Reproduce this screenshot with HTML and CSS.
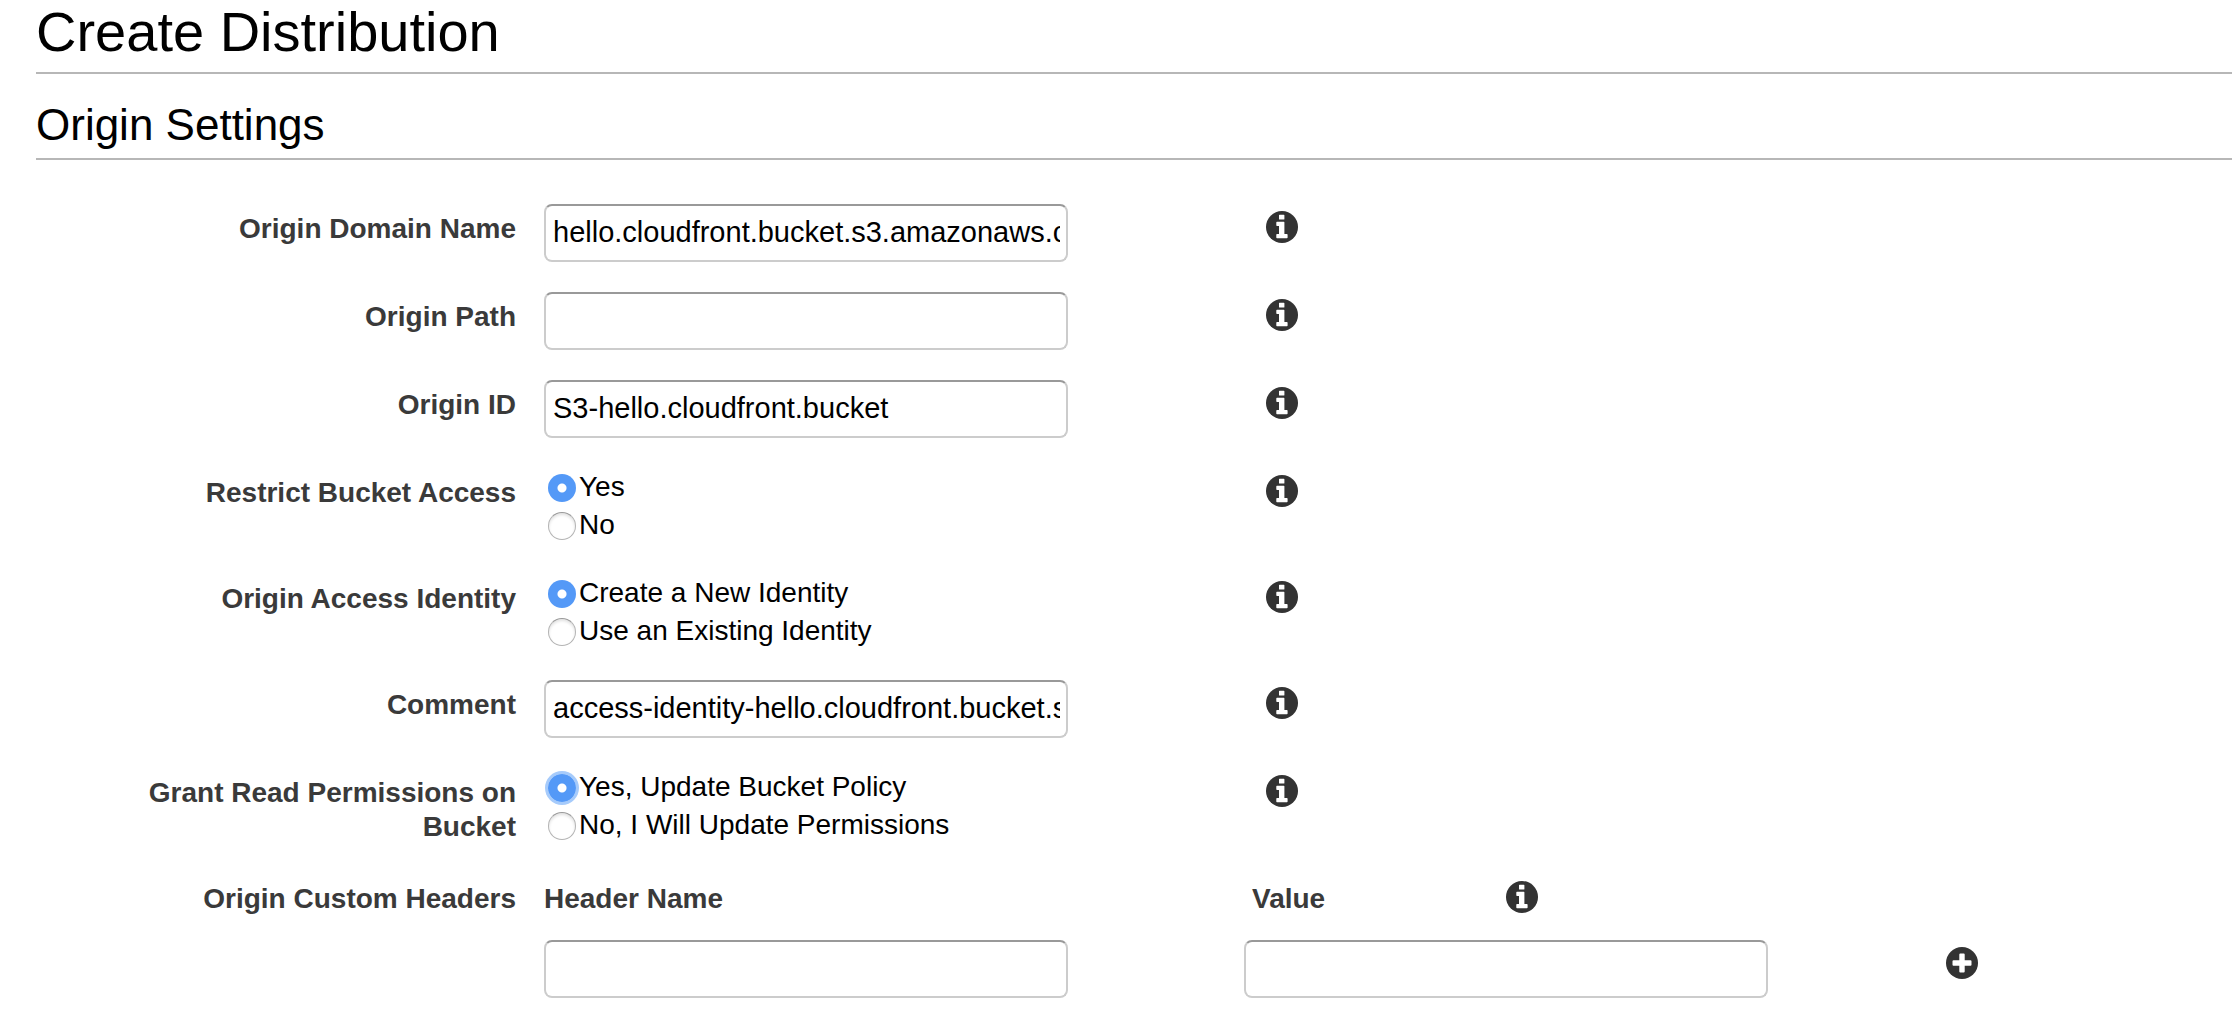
FILE: index.html
```html
<!DOCTYPE html>
<html lang="en">
<head>
<meta charset="utf-8">
<meta name="viewport" content="width=device-width, initial-scale=1">
<title>Create Distribution</title>
<link rel="stylesheet" href="styles.css">
</head>
<body>
<svg class="sprite" aria-hidden="true">
  <symbol id="info" viewBox="0 0 32 32">
    <circle cx="16" cy="16" r="16" fill="#333"/>
    <path fill="#fff" d="M13.600 3.700h4.200q.6 0 .6.600v3.700q0 .6-.6.600h-4.200q-.6 0-.6-.6V4.300q0-.6.600-.6zM11 10.700h6.800q.6 0 .6.600V23h2.500q.7 0 .7.700v2.900q0 .7-.7.700H11q-.7 0-.7-.7v-2.900q0-.7.700-.7h2V15h-2q-.7 0-.7-.7v-2.900q0-.7.700-.7z"/>
  </symbol>
  <symbol id="plus" viewBox="0 0 32 32">
    <circle cx="16" cy="16" r="16" fill="#333"/>
    <path fill="#fff" d="M14.300 6.500h3.400q1 0 1 1v5.800h5.800q1 0 1 1v3.400q0 1-1 1h-5.800v5.800q0 1-1 1h-3.400q-1 0-1-1v-5.800H7.500q-1 0-1-1v-3.400q0-1 1-1h5.800V7.500q0-1 1-1z"/>
  </symbol>
</svg>
<main class="page">
  <h1 class="title">Create Distribution</h1>
  <h2 class="section-title">Origin Settings</h2>
  <form class="form">
    <div class="row">
      <label class="label" for="domain">Origin Domain Name</label>
      <div><input class="text-input" id="domain" type="text" value="hello.cloudfront.bucket.s3.amazonaws.com"></div>
      <div class="help"><button class="icon-button" type="button" aria-label="About origin domain name"><svg class="icon"><use href="#info"/></svg></button></div>
    </div>
    <div class="row">
      <label class="label" for="path">Origin Path</label>
      <div><input class="text-input" id="path" type="text"></div>
      <div class="help"><button class="icon-button" type="button" aria-label="About origin path"><svg class="icon"><use href="#info"/></svg></button></div>
    </div>
    <div class="row">
      <label class="label" for="origin-id">Origin ID</label>
      <div><input class="text-input" id="origin-id" type="text" value="S3-hello.cloudfront.bucket"></div>
      <div class="help"><button class="icon-button" type="button" aria-label="About origin ID"><svg class="icon"><use href="#info"/></svg></button></div>
    </div>
    <div class="row" role="radiogroup" aria-labelledby="restrict">
      <span class="label" id="restrict">Restrict Bucket Access</span>
      <div>
        <label class="option"><input class="radio" type="radio" name="restrict" checked>Yes</label>
        <label class="option"><input class="radio" type="radio" name="restrict">No</label>
      </div>
      <div class="help"><button class="icon-button" type="button" aria-label="About restricting bucket access"><svg class="icon"><use href="#info"/></svg></button></div>
    </div>
    <div class="row" role="radiogroup" aria-labelledby="identity">
      <span class="label" id="identity">Origin Access Identity</span>
      <div>
        <label class="option"><input class="radio" type="radio" name="identity" checked>Create a New Identity</label>
        <label class="option"><input class="radio" type="radio" name="identity">Use an Existing Identity</label>
      </div>
      <div class="help"><button class="icon-button" type="button" aria-label="About origin access identity"><svg class="icon"><use href="#info"/></svg></button></div>
    </div>
    <div class="row">
      <label class="label" for="comment">Comment</label>
      <div><input class="text-input" id="comment" type="text" value="access-identity-hello.cloudfront.bucket.s3.amazonaws.com"></div>
      <div class="help"><button class="icon-button" type="button" aria-label="About comment"><svg class="icon"><use href="#info"/></svg></button></div>
    </div>
    <div class="row" role="radiogroup" aria-labelledby="grant">
      <span class="label" id="grant">Grant Read Permissions on Bucket</span>
      <div>
        <label class="option"><input class="radio radio-focused" type="radio" name="grant" checked>Yes, Update Bucket Policy</label>
        <label class="option"><input class="radio" type="radio" name="grant">No, I Will Update Permissions</label>
      </div>
      <div class="help"><button class="icon-button" type="button" aria-label="About read permissions"><svg class="icon"><use href="#info"/></svg></button></div>
    </div>
    <div class="row" role="group" aria-labelledby="headers">
      <span class="label" id="headers">Origin Custom Headers</span>
      <div class="field">
        <label class="field-label" for="header-name">Header Name</label>
        <input class="text-input" id="header-name" type="text">
      </div>
      <div class="field">
        <div class="value-heading">
          <label class="field-label" for="header-value">Value</label>
          <button class="icon-button" type="button" aria-label="About custom headers"><svg class="icon"><use href="#info"/></svg></button>
        </div>
        <div class="value-entry">
          <input class="text-input" id="header-value" type="text">
          <button class="icon-button" type="button" aria-label="Add header"><svg class="icon"><use href="#plus"/></svg></button>
        </div>
      </div>
    </div>
  </form>
</main>
</body>
</html>
```
FILE: styles.css
```css
* {
  box-sizing: border-box;
}

body {
  margin: 0;
  background: #fff;
  color: #000;
  font: 28px/34px "Liberation Sans", Arial, Helvetica, sans-serif;
}

.sprite {
  display: none;
}

.page {
  padding-left: 36px;
}

.title,
.section-title {
  margin: 0;
  padding-bottom: 8px;
  border-bottom: 2px solid #b7b7b7;
  font-weight: 400;
}

.title {
  font-size: 56px;
  line-height: 64px;
}

.section-title {
  margin-top: 26px;
  font-size: 44px;
  line-height: 50px;
}

.form {
  display: flex;
  flex-direction: column;
  gap: 30px;
  padding: 44px 0 26px;
}

.row {
  display: grid;
  grid-template-columns: minmax(0, 508fr) minmax(0, 700fr) minmax(0, 988fr);
  align-items: start;
}

.label,
.field-label {
  padding-top: 8px;
  color: #3a3a3a;
  font-weight: 700;
}

.label {
  padding-right: 28px;
  padding-left: 100px;
  text-align: right;
}

.text-input {
  display: block;
  width: 524px;
  max-width: 100%;
  height: 58px;
  padding: 0 6px 2px 7px;
  border: 2px solid #ccc;
  border-top-color: #999;
  border-radius: 8px;
  background: #fff;
  color: #000;
  font-family: inherit;
  font-size: 29px;
}

.option {
  display: flex;
  align-items: flex-start;
  gap: 3px;
  padding-left: 4px;
  line-height: 38px;
}

.radio {
  flex: none;
  appearance: none;
  width: 28px;
  height: 28px;
  margin: 6px 0 0;
  border: 1px solid #b4b4b4;
  border-top-color: #999;
  border-radius: 50%;
  background: #fff;
  box-shadow: inset 0 2px 3px #e2e2e2;
}

.radio:checked {
  border: 0;
  background: radial-gradient(circle, #fff 4px, #5499f7 5px);
  box-shadow: none;
}

.radio-focused:checked {
  box-shadow: 0 0 0 3px #a6cbfb;
}

.help {
  padding-left: 22px;
}

.icon-button {
  flex: none;
  display: block;
  margin: 7px 0 0;
  padding: 0;
  border: 0;
  background: none;
  cursor: pointer;
}

.icon {
  display: block;
  width: 32px;
  height: 32px;
}

.field {
  display: flex;
  flex-direction: column;
  gap: 24px;
}

.value-heading,
.value-entry {
  display: flex;
  align-items: flex-start;
}

.value-heading {
  height: 42px;
  padding-left: 8px;
}

.value-heading .field-label {
  width: 254px;
}

.value-entry {
  gap: 178px;
}
```
